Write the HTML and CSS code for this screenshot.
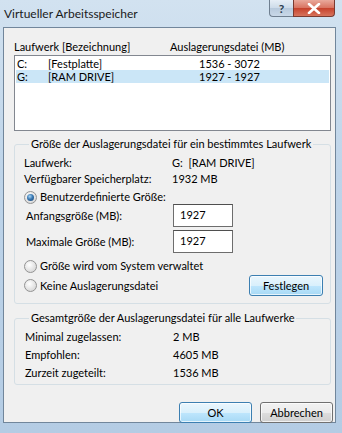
FILE: index.html
```html
<!DOCTYPE html>
<html lang="de">
<head>
    <meta charset="UTF-8">
    <title>Virtueller Arbeitsspeicher</title>
    <link rel="stylesheet" href="styles.css">
</head>
<body>
    <div class="window">
        <div class="titlebar">
            <span class="title">Virtueller Arbeitsspeicher</span>
            <div class="caption">
                <span class="cap-btn help">?</span>
                <span class="cap-btn close">
                    <svg width="14" height="11" viewBox="0 0 14 11">
                        <path d="M2 1 L12 10 M12 1 L2 10" stroke="#fff" stroke-width="2.6" stroke-linecap="round"/>
                    </svg>
                </span>
            </div>
        </div>
        <div class="client">
            <div class="list-head">
                <span class="col-drive">Laufwerk [Bezeichnung]</span>
                <span class="col-size">Auslagerungsdatei (MB)</span>
            </div>
            <div class="listbox">
                <div class="list-row">
                    <span class="c1">C:</span><span class="c2">[Festplatte]</span><span class="c3">1536 - 3072</span>
                </div>
                <div class="list-row selected">
                    <span class="c1">G:</span><span class="c2">[RAM DRIVE]</span><span class="c3">1927 - 1927</span>
                </div>
            </div>

            <fieldset class="group group-drive">
                <legend>Größe der Auslagerungsdatei für ein bestimmtes Laufwerk</legend>
                <div class="info-row"><span class="key">Laufwerk:</span><span class="val">G:&nbsp; [RAM DRIVE]</span></div>
                <div class="info-row"><span class="key">Verfügbarer Speicherplatz:</span><span class="val">1932 MB</span></div>
                <div class="radio-row first"><span class="radio checked"></span>Benutzerdefinierte Größe:</div>
                <div class="field-row"><span class="field-label">Anfangsgröße (MB):</span><span class="textbox">1927</span></div>
                <div class="field-row second"><span class="field-label">Maximale Größe (MB):</span><span class="textbox">1927</span></div>
                <div class="radio-row system"><span class="radio"></span>Größe wird vom System verwaltet</div>
                <div class="radio-row last">
                    <span class="radio"></span>Keine Auslagerungsdatei
                    <span class="btn blue set">Festlegen</span>
                </div>
            </fieldset>

            <fieldset class="group group-total">
                <legend>Gesamtgröße der Auslagerungsdatei für alle Laufwerke</legend>
                <div class="total-row"><span class="key">Minimal zugelassen:</span><span class="val">2 MB</span></div>
                <div class="total-row"><span class="key">Empfohlen:</span><span class="val">4605 MB</span></div>
                <div class="total-row"><span class="key">Zurzeit zugeteilt:</span><span class="val">1536 MB</span></div>
            </fieldset>

            <div class="actions">
                <span class="btn blue">OK</span>
                <span class="btn">Abbrechen</span>
            </div>
        </div>
    </div>
</body>
</html>
```

FILE: styles.css
```css
body {
    margin: 0;
    font-family: Lato, "Noto Sans", sans-serif;
    font-size: 11px;
    color: #000;
}
.window {
    width: 342px;
    height: 433px;
    background: linear-gradient(to bottom, #d2e2f0 0%, #bed4e9 40%, #b4cce4 100%);
    padding-left: 3px;
    box-sizing: border-box;
}
.titlebar {
    height: 27px;
    display: flex;
    justify-content: space-between;
    align-items: flex-start;
}
.title {
    margin-top: 6px;
    margin-left: 1px;
    line-height: 16px;
    font-size: 12px;
    color: #1a1a1a;
}
.caption {
    display: flex;
    margin-right: 7px;
}
.cap-btn {
    height: 17px;
    box-sizing: border-box;
    border: 1px solid #6f7f90;
    border-top: none;
    display: flex;
    align-items: center;
    justify-content: center;
}
.help {
    width: 24px;
    border-right: none;
    border-radius: 0 0 0 4px;
    background: linear-gradient(to bottom, #e6eef6 0%, #cddbe9 50%, #b7c9dc 51%, #c9d8e8 100%);
    color: #2c3d50;
    font-weight: bold;
    font-size: 12px;
}
.close {
    width: 42px;
    border-radius: 0 0 4px 0;
    background: linear-gradient(to bottom, #e9a99b 0%, #d8725f 50%, #c6412b 51%, #d7735c 100%);
    border-color: #7a3a30;
}
.client {
    width: 333px;
    height: 396px;
    box-sizing: border-box;
    background: #f0f0f0;
    border: 1px solid #71869b;
    padding: 11px 4px 0 10px;
}
.list-head {
    display: flex;
    line-height: 16px;
}
.col-drive {
    width: 156px;
}
.listbox {
    height: 76px;
    box-sizing: border-box;
    background: #fff;
    border: 1px solid #828790;
    padding: 1px;
    width: 317px;
}
.list-row {
    display: flex;
    height: 13px;
    line-height: 13px;
    padding-left: 1px;
}
.list-row.selected {
    background: #cbe6f7;
}
.c1 {
    width: 31px;
}
.c2 {
    width: 151px;
}
.group {
    margin: 6px 0 0 0;
    padding: 0 0 0 9px;
    border: 1px solid #d5dfe5;
    border-radius: 3px;
    width: 317px;
    box-sizing: border-box;
    min-width: 0;
}
.group legend {
    padding: 0 2px;
    margin-left: 5px;
    line-height: 14px;
    white-space: nowrap;
}
.group-drive {
    height: 167px;
}
.info-row {
    display: flex;
    line-height: 16px;
}
.info-row:first-of-type {
    margin-top: 4px;
}
.key {
    width: 148px;
}
.radio-row {
    display: flex;
    align-items: center;
    line-height: 16px;
}
.radio-row.first {
    margin-top: 3px;
    height: 14px;
}
.radio-row.system {
    margin-top: 5px;
}
.radio-row.last {
    height: 21px;
    margin-top: 1px;
}
.radio {
    width: 13px;
    height: 13px;
    box-sizing: border-box;
    border-radius: 50%;
    border: 1px solid #939393;
    background: radial-gradient(circle at 40% 35%, #ffffff 0%, #e6e6e6 50%, #cfcfcf 100%);
    margin-right: 3px;
    display: flex;
    align-items: center;
    justify-content: center;
}
.radio.checked::after {
    content: "";
    width: 7px;
    height: 7px;
    border-radius: 50%;
    background: radial-gradient(circle at 40% 35%, #a9d6f5 0%, #3a79b3 45%, #173f6b 100%);
}
.field-row {
    display: flex;
    align-items: center;
    height: 23px;
}
.field-row.second {
    margin-top: 3px;
}
.field-label {
    width: 147px;
    padding-left: 2px;
}
.textbox {
    width: 60px;
    height: 23px;
    box-sizing: border-box;
    border: 1px solid #6d6d6d;
    border-top-color: #4f4f4f;
    background: #fff;
    padding: 2px 0 0 6px;
    line-height: 16px;
}
.btn {
    display: flex;
    align-items: center;
    justify-content: center;
    width: 73px;
    height: 21px;
    box-sizing: border-box;
    border: 1px solid #707070;
    border-radius: 3px;
    background: linear-gradient(to bottom, #f2f2f2 0%, #ebebeb 50%, #dddddd 51%, #cfcfcf 100%);
    box-shadow: inset 0 0 0 1px rgba(255, 255, 255, 0.7);
}
.btn.blue {
    border-color: #3c7fb1;
    background: linear-gradient(to bottom, #eaf6fd 0%, #d9f0fc 50%, #bee6fd 51%, #a7d9f5 100%);
}
.set {
    margin-left: auto;
    margin-right: 7px;
    width: 74px;
}
.group-total {
    margin-top: 7px;
    height: 74px;
}
.total-row {
    display: flex;
    line-height: 18px;
    padding-left: 1px;
}
.total-row:first-of-type {
    margin-top: 3px;
}
.actions {
    display: flex;
    justify-content: flex-end;
    gap: 8px;
    margin-top: 17px;
    margin-right: -2px;
}
```
